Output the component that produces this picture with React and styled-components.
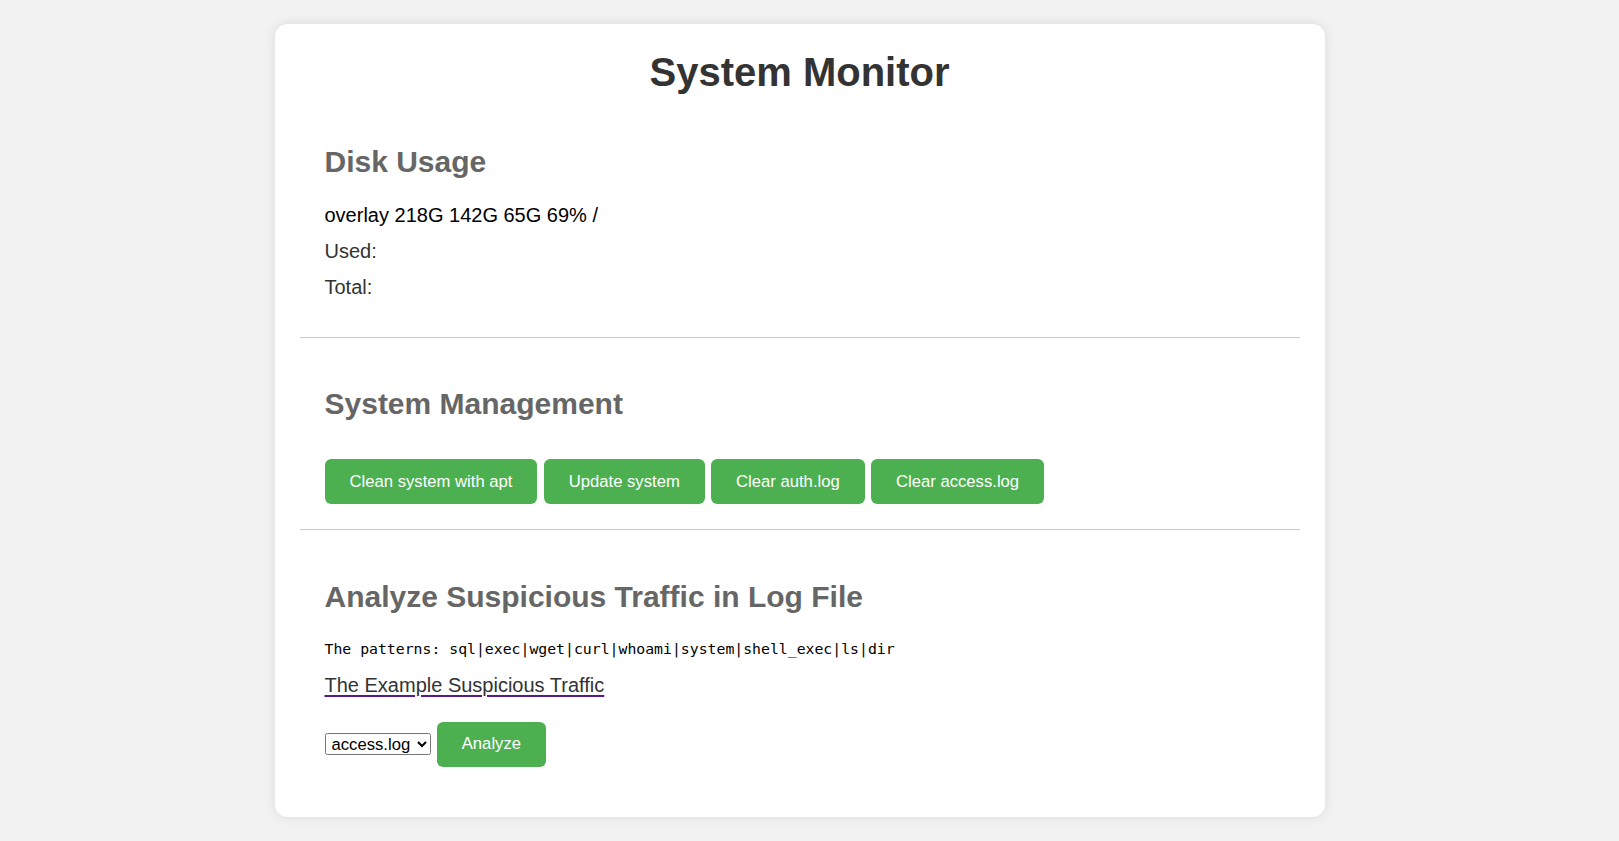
import React from "react";
import styled, { createGlobalStyle } from "styled-components";

const GlobalStyle = createGlobalStyle`
  html, body {
    margin: 0;
    padding: 0;
    background-color: #F2F2F2;
  }
  body {
    font-family: "Liberation Sans", Arial, sans-serif;
    color: #333333;
  }
`;

const Page = styled.div`
  padding: 23.5px 20px 30px 0;
`;

const Card = styled.main`
  box-sizing: border-box;
  width: 1050px;
  margin: 0 auto;
  padding: 25px;
  background-color: #FFFFFF;
  border-radius: 12.5px;
  box-shadow: 0 0 12px rgba(0, 0, 0, 0.1);
`;

const Title = styled.h1`
  margin: 0 0 1px;
  font-size: 40px;
  line-height: 46px;
  font-weight: 700;
  text-align: center;
  color: #333333;
`;

const Section = styled.section`
  padding: 25px 25px ${(p) => p.$bottom || 25}px;
  border-bottom: ${(p) => (p.$divider ? "1px solid #CCCCCC" : "none")};
`;

const Heading = styled.h2`
  margin: ${(p) => p.$top || 24}px 0 25px;
  font-size: 30px;
  line-height: 34.5px;
  font-weight: 700;
  color: #666666;
`;

const Line = styled.p`
  margin: 0 0 12.75px;
  font-size: 20px;
  line-height: 23px;
  color: ${(p) => p.$color || "#333333"};
`;

const ButtonRow = styled.div`
  display: flex;
  flex-wrap: wrap;
  gap: 6.25px;
  margin-top: 37.5px;
`;

const GreenButton = styled.button`
  padding: 12.5px 25px;
  border: none;
  border-radius: 6.25px;
  background-color: #4CAF50;
  color: #FFFFFF;
  font-family: "Liberation Sans", Arial, sans-serif;
  font-size: 16.67px;
  line-height: 20px;
  cursor: pointer;

  &:hover {
    background-color: #45A049;
  }
`;

const Patterns = styled.p`
  margin: 0;
  font-family: "DejaVu Sans Mono", "Liberation Mono", monospace;
  font-size: 14.8px;
  line-height: 19px;
  color: #000000;
`;

const ExampleLink = styled.a`
  display: inline-block;
  margin-top: 15.25px;
  font-size: 20px;
  line-height: 23px;
  color: #333333;
  text-decoration: underline;
  text-decoration-color: #551A8B;
  text-underline-offset: 2.5px;
`;

const AnalyzeForm = styled.form`
  display: flex;
  align-items: center;
  gap: 6.25px;
  margin-top: 25.2px;
`;

const LogSelect = styled.select`
  box-sizing: border-box;
  height: 22px;
  width: 106px;
  padding: 0 0 0 2px;
  border: 1px solid #767676;
  border-radius: 2.5px;
  background-color: #FFFFFF;
  color: #000000;
  font-family: "Liberation Sans", Arial, sans-serif;
  font-size: 16.67px;
`;

const buttons = [
  "Clean system with apt",
  "Update system",
  "Clear auth.log",
  "Clear access.log",
];

export default function App() {
  return (
    <>
      <GlobalStyle />
      <Page>
        <Card>
          <Title>System Monitor</Title>

          <Section $divider $bottom={26}>
            <Heading>Disk Usage</Heading>
            <Line $color="#000000">overlay 218G 142G 65G 69% /</Line>
            <Line>Used: </Line>
            <Line>Total: </Line>
          </Section>

          <Section $divider>
            <Heading>System Management</Heading>
            <ButtonRow>
              {buttons.map((label) => (
                <GreenButton key={label} type="button">
                  {label}
                </GreenButton>
              ))}
            </ButtonRow>
          </Section>

          <Section>
            <Heading $top={24.5}>Analyze Suspicious Traffic in Log File</Heading>
            <Patterns>
              The patterns: sql|exec|wget|curl|whoami|system|shell_exec|ls|dir
            </Patterns>
            <ExampleLink href="#example">The Example Suspicious Traffic</ExampleLink>
            <AnalyzeForm onSubmit={(e) => e.preventDefault()}>
              <LogSelect defaultValue="access.log">
                <option value="access.log">access.log</option>
                <option value="auth.log">auth.log</option>
              </LogSelect>
              <GreenButton type="submit">Analyze</GreenButton>
            </AnalyzeForm>
          </Section>
        </Card>
      </Page>
    </>
  );
}
